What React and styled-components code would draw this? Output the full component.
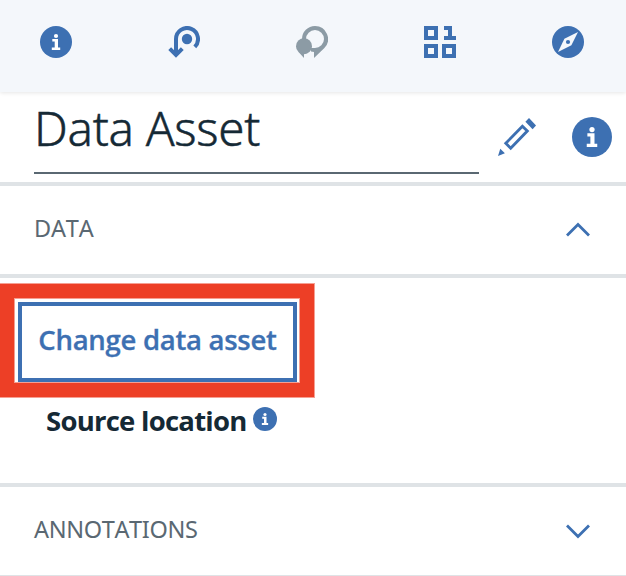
import React from "react";
import styled, { createGlobalStyle } from "styled-components";

const GlobalStyle = createGlobalStyle`
  *, *::before, *::after { box-sizing: border-box; }
  body { margin: 0; background: #fff; overflow: hidden; }
  svg { display: block; flex: none; }
`;

const BLUE = "#3d70b2";
const RULE = "#dfe3e6";

const Panel = styled.main`
  width: 626px;
  height: 576px;
  background: #fff;
  color: #152935;
  font-family: "Noto Sans", "Open Sans", sans-serif;
`;

const Toolbar = styled.nav`
  display: flex;
  justify-content: space-between;
  padding: 26px 42px 0 40px;
  height: 92px;
  background: #f4f7fb;
  box-shadow: 0 1px 4px rgba(0, 0, 0, 0.1);
`;

const IconButton = styled.button`
  display: block;
  flex: none;
  width: ${(p) => p.$size || 32}px;
  height: ${(p) => p.$size || 32}px;
  padding: 0;
  border: 0;
  background: none;
  color: ${(p) => (p.$muted ? "#8c9ba5" : BLUE)};
`;

const TitleRow = styled.header`
  display: flex;
  align-items: flex-start;
  height: 94px;
  padding-left: 34px;
  border-bottom: 4px solid ${RULE};
`;

const Title = styled.h1`
  width: 445px;
  height: 82px;
  margin: 0 19px 0 0;
  border-bottom: 2px solid #5a6872;
  font-size: 47.5px;
  line-height: 72px;
  font-weight: 300;
  -webkit-text-stroke: 0.5px currentColor;
  letter-spacing: ${(p) => p.$tracking}px;
  white-space: nowrap;
`;

const TitleActions = styled.div`
  display: flex;
  align-items: center;
  gap: 36px;
  padding-top: 25px;
`;

const SectionHeader = styled.div`
  display: flex;
  align-items: center;
  justify-content: space-between;
  height: ${(p) => (p.$last ? 89 : 92)}px;
  padding: 0 36px 0 34px;
  border-bottom: ${(p) => (p.$last ? 1 : 4)}px solid ${RULE};
`;

const SectionName = styled.h2`
  margin: 0;
  padding-bottom: 5px;
  color: #5a6872;
  font-size: 23.5px;
  line-height: 32px;
  font-weight: 400;
  font-kerning: none;
  letter-spacing: ${(p) => p.$tracking}px;
`;

const SectionBody = styled.section`
  display: flex;
  flex-direction: column;
  align-items: flex-start;
  height: 209px;
  padding: 24px 0 0 18px;
  border-bottom: 4px solid ${RULE};
`;

const Highlighted = styled.div`
  position: relative;
  width: 279px;
  height: 80px;
`;

const Highlight = styled.div`
  position: absolute;
  top: -18px;
  left: -18px;
  width: 314px;
  height: 113px;
  border: 14px solid #ed3f26;
  box-shadow: 0 0 0 1px rgba(237, 63, 38, 0.5), inset 0 0 0 1px rgba(237, 63, 38, 0.5);
  pointer-events: none;
`;

const ChangeButton = styled.button`
  width: 100%;
  height: 100%;
  padding: 0 0 4px;
  border: 4px solid ${BLUE};
  background: #fff;
  color: ${BLUE};
  font: 600 27.5px/36px "Open Sans", "Noto Sans", sans-serif;
  -webkit-text-stroke: 0.3px currentColor;
  letter-spacing: ${(p) => p.$tracking}px;
  white-space: nowrap;
`;

const FieldLabel = styled.div`
  display: flex;
  align-items: flex-start;
  gap: 6px;
  margin: 20px 0 0 28px;
  font-size: 27.5px;
  line-height: 38px;
  font-weight: 700;
  color: ${BLUE};
  svg { margin-top: 5px; }
`;

const LabelText = styled.span`
  width: 201px;
  color: #152935;
  font-family: "Open Sans", "Noto Sans", sans-serif;
  letter-spacing: ${(p) => p.$tracking}px;
  white-space: nowrap;
`;

const InfoIcon = ({ size = 32 }) => (
  <svg width={size} height={size} viewBox="0 0 32 32">
    <circle cx="16" cy="16" r="16" fill="currentColor" />
    <circle cx="16" cy="10" r="2.1" fill="#fff" />
    <path d="M12.3 13H18v8.4h2.2V24h-8.4v-2.6h2.9v-5.8h-2.4z" fill="#fff" />
  </svg>
);

const ReturnIcon = () => (
  <svg width="32" height="32" viewBox="0 0 32 32" fill="none" stroke="currentColor" strokeWidth="4">
    <circle cx="19" cy="13" r="5.2" fill="currentColor" stroke="none" />
    <path d="M26.8 20.8A11 11 0 1 0 8 13v16" />
    <path d="M1.7 22.7 8 29l6.3-6.3" />
  </svg>
);

const CommentsIcon = () => (
  <svg width="32" height="32" viewBox="0 0 32 32" fill="currentColor">
    <path fillRule="evenodd" d="M19 0a13 13 0 0 1 9.4 22L18 32v-6l-3-.6-1-3.4h5a9 9 0 1 0-9-9H6A13 13 0 0 1 19 0z" />
    <circle cx="8" cy="20.2" r="8" />
    <path d="M2.3 25.8 8 32v-4l3-.5z" />
  </svg>
);

const DataIcon = () => (
  <svg width="32" height="32" viewBox="0 0 32 32" fill="none" stroke="currentColor" strokeWidth="4">
    <path d="M2 2h10v10H2zM2 20h10v10H2zM20 20h10v10H20z" />
    <path d="M20 0h8v10h4v4H20v-4h4V4h-4z" fill="currentColor" stroke="none" />
  </svg>
);

const CompassIcon = () => (
  <svg width="32" height="32" viewBox="0 0 32 32">
    <circle cx="16" cy="16" r="16" fill="currentColor" />
    <path d="M26 6 12.4 12.8 6 26l13.4-6.7z" fill="#f4f7fb" />
    <circle cx="16" cy="16" r="2.1" fill="currentColor" />
  </svg>
);

const PencilIcon = () => (
  <svg width="38" height="38" viewBox="0 0 38 38" fill="currentColor">
    <path d="M31 0 38 7.6 34.6 11.2 27.4 3.7z" />
    <path d="M24.4 8.3 29.3 13 12.7 30.2 7.8 25.3z" fill="none" stroke="currentColor" strokeWidth="2.9" />
    <path d="M2.3 30.8 6.9 35.2 0 38z" />
  </svg>
);

const Chevron = ({ up }) => (
  <svg width="24" height="18" viewBox="0 0 24 18" fill="none" stroke="currentColor" strokeWidth="2.8">
    <path d={up ? "M1 14.5 12 3.5l11 11" : "M1 3.5l11 11 11-11"} />
  </svg>
);

const Toggle = styled.button`
  padding: 0;
  border: 0;
  background: none;
  color: ${BLUE};
`;

export default function App() {
  return (
    <Panel>
      <GlobalStyle />
      <Toolbar>
        <IconButton aria-label="Information"><InfoIcon /></IconButton>
        <IconButton aria-label="Return"><ReturnIcon /></IconButton>
        <IconButton aria-label="Comments" $muted><CommentsIcon /></IconButton>
        <IconButton aria-label="Data"><DataIcon /></IconButton>
        <IconButton aria-label="Explore"><CompassIcon /></IconButton>
      </Toolbar>
      <TitleRow>
        <Title $tracking={-0.3}>Data Asset</Title>
        <TitleActions>
          <IconButton aria-label="Rename" $size={38}><PencilIcon /></IconButton>
          <IconButton aria-label="About" $size={40}><InfoIcon size={40} /></IconButton>
        </TitleActions>
      </TitleRow>
      <SectionHeader>
        <SectionName $tracking={-0.2}>DATA</SectionName>
        <Toggle aria-label="Collapse"><Chevron up /></Toggle>
      </SectionHeader>
      <SectionBody>
        <Highlighted>
          <ChangeButton $tracking={-0.28}>Change data asset</ChangeButton>
          <Highlight />
        </Highlighted>
        <FieldLabel>
          <LabelText $tracking={-0.75}>Source location</LabelText>
          <InfoIcon size={24} />
        </FieldLabel>
      </SectionBody>
      <SectionHeader $last>
        <SectionName $tracking={-0.35}>ANNOTATIONS</SectionName>
        <Toggle aria-label="Expand"><Chevron /></Toggle>
      </SectionHeader>
    </Panel>
  );
}
